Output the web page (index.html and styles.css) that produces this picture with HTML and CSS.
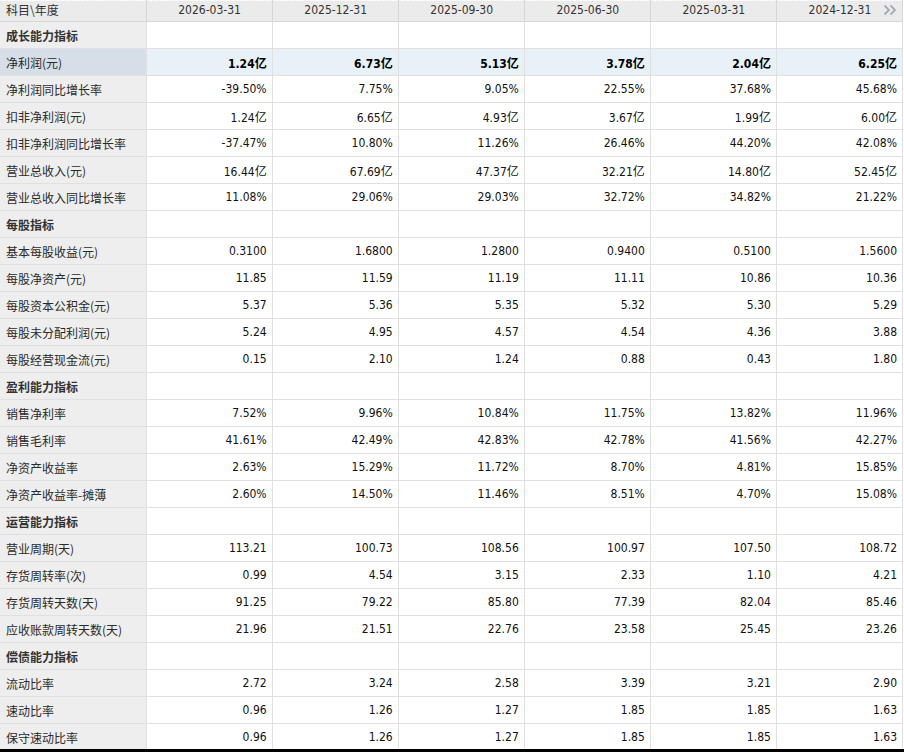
FILE: index.html
```html
<!DOCTYPE html>
<html lang="zh-CN">
<head>
<meta charset="utf-8">
<title>主要指标</title>
<link rel="stylesheet" href="styles.css">
</head>
<body>
<div class="wrap">
<table class="fin">
<colgroup><col class="c0"><col class="cd"><col class="cd"><col class="cd"><col class="cd"><col class="cd"><col class="cd"></colgroup>
<thead>
<tr class="head"><th class="name">科目\年度</th><th>2026-03-31</th><th>2025-12-31</th><th>2025-09-30</th><th>2025-06-30</th><th>2025-03-31</th><th class="last">2024-12-31<svg class="more" width="14" height="12" viewBox="0 0 14 12"><path d="M1.5 1.5 L6 6 L1.5 10.5 M7.5 1.5 L12 6 L7.5 10.5" fill="none" stroke="#a3abb5" stroke-width="1.8"/></svg></th></tr>
</thead>
<tbody>
<tr class="sec"><td class="name">成长能力指标</td><td></td><td></td><td></td><td></td><td></td><td></td></tr>
<tr class="hl"><td class="name">净利润(元)</td><td>1.24亿</td><td>6.73亿</td><td>5.13亿</td><td>3.78亿</td><td>2.04亿</td><td>6.25亿</td></tr>
<tr><td class="name">净利润同比增长率</td><td>-39.50%</td><td>7.75%</td><td>9.05%</td><td>22.55%</td><td>37.68%</td><td>45.68%</td></tr>
<tr><td class="name">扣非净利润(元)</td><td>1.24亿</td><td>6.65亿</td><td>4.93亿</td><td>3.67亿</td><td>1.99亿</td><td>6.00亿</td></tr>
<tr><td class="name">扣非净利润同比增长率</td><td>-37.47%</td><td>10.80%</td><td>11.26%</td><td>26.46%</td><td>44.20%</td><td>42.08%</td></tr>
<tr><td class="name">营业总收入(元)</td><td>16.44亿</td><td>67.69亿</td><td>47.37亿</td><td>32.21亿</td><td>14.80亿</td><td>52.45亿</td></tr>
<tr><td class="name">营业总收入同比增长率</td><td>11.08%</td><td>29.06%</td><td>29.03%</td><td>32.72%</td><td>34.82%</td><td>21.22%</td></tr>
<tr class="sec"><td class="name">每股指标</td><td></td><td></td><td></td><td></td><td></td><td></td></tr>
<tr><td class="name">基本每股收益(元)</td><td>0.3100</td><td>1.6800</td><td>1.2800</td><td>0.9400</td><td>0.5100</td><td>1.5600</td></tr>
<tr><td class="name">每股净资产(元)</td><td>11.85</td><td>11.59</td><td>11.19</td><td>11.11</td><td>10.86</td><td>10.36</td></tr>
<tr><td class="name">每股资本公积金(元)</td><td>5.37</td><td>5.36</td><td>5.35</td><td>5.32</td><td>5.30</td><td>5.29</td></tr>
<tr><td class="name">每股未分配利润(元)</td><td>5.24</td><td>4.95</td><td>4.57</td><td>4.54</td><td>4.36</td><td>3.88</td></tr>
<tr><td class="name">每股经营现金流(元)</td><td>0.15</td><td>2.10</td><td>1.24</td><td>0.88</td><td>0.43</td><td>1.80</td></tr>
<tr class="sec"><td class="name">盈利能力指标</td><td></td><td></td><td></td><td></td><td></td><td></td></tr>
<tr><td class="name">销售净利率</td><td>7.52%</td><td>9.96%</td><td>10.84%</td><td>11.75%</td><td>13.82%</td><td>11.96%</td></tr>
<tr><td class="name">销售毛利率</td><td>41.61%</td><td>42.49%</td><td>42.83%</td><td>42.78%</td><td>41.56%</td><td>42.27%</td></tr>
<tr><td class="name">净资产收益率</td><td>2.63%</td><td>15.29%</td><td>11.72%</td><td>8.70%</td><td>4.81%</td><td>15.85%</td></tr>
<tr><td class="name">净资产收益率-摊薄</td><td>2.60%</td><td>14.50%</td><td>11.46%</td><td>8.51%</td><td>4.70%</td><td>15.08%</td></tr>
<tr class="sec"><td class="name">运营能力指标</td><td></td><td></td><td></td><td></td><td></td><td></td></tr>
<tr><td class="name">营业周期(天)</td><td>113.21</td><td>100.73</td><td>108.56</td><td>100.97</td><td>107.50</td><td>108.72</td></tr>
<tr><td class="name">存货周转率(次)</td><td>0.99</td><td>4.54</td><td>3.15</td><td>2.33</td><td>1.10</td><td>4.21</td></tr>
<tr><td class="name">存货周转天数(天)</td><td>91.25</td><td>79.22</td><td>85.80</td><td>77.39</td><td>82.04</td><td>85.46</td></tr>
<tr><td class="name">应收账款周转天数(天)</td><td>21.96</td><td>21.51</td><td>22.76</td><td>23.58</td><td>25.45</td><td>23.26</td></tr>
<tr class="sec"><td class="name">偿债能力指标</td><td></td><td></td><td></td><td></td><td></td><td></td></tr>
<tr><td class="name">流动比率</td><td>2.72</td><td>3.24</td><td>2.58</td><td>3.39</td><td>3.21</td><td>2.90</td></tr>
<tr><td class="name">速动比率</td><td>0.96</td><td>1.26</td><td>1.27</td><td>1.85</td><td>1.85</td><td>1.63</td></tr>
<tr><td class="name">保守速动比率</td><td>0.96</td><td>1.26</td><td>1.27</td><td>1.85</td><td>1.85</td><td>1.63</td></tr>
</tbody>
</table>
</div>
</body>
</html>
```
FILE: styles.css
```css
html { background: #000; }
body { margin: 0; background: #000; }
.wrap {
  width: 904px;
  height: 749px;
  overflow: hidden;
  background: #fff;
}
.fin {
  border-collapse: collapse;
  table-layout: fixed;
  width: 903px;
  font-family: "DejaVu Sans Condensed", "DejaVu Sans", "Noto Sans CJK SC", sans-serif;
  font-stretch: condensed;
  font-size: 12px;
  color: #111;
}
.c0 { width: 146px; }
.cd { width: 126px; }
.fin th, .fin td {
  border: 1px solid #e0e0e0;
  padding: 0 5px 0 6px;
  white-space: nowrap;
  overflow: hidden;
}
.fin td { text-align: right; height: 26px; }
.fin td.name {
  text-align: left;
  background: #eeeeee;
  font-family: "Noto Sans CJK SC", sans-serif;
  color: #2a2a2a;
  border-left: none;
}
.head th {
  height: 20px;
  background: #ebebeb;
  border-color: #d6d6d6;
  border-top: 1px dashed #f6f6f6;
  font-weight: normal;
  color: #333;
  text-align: center;
  padding-top: 0;
  vertical-align: top;
  line-height: 18px;
  position: relative;
}
.head th.name {
  text-align: left;
  font-family: "Noto Sans CJK SC", sans-serif;
  border-left: none;
}
.more { position: absolute; right: 5px; top: 3px; }
.sec td.name {
  font-weight: bold;
  color: #333;
}
.hl td { background: #e8f0f8; font-weight: bold; color: #000; }
.hl td.name { background: #d6dee7; font-weight: normal; color: #2a2a2a; }
```
